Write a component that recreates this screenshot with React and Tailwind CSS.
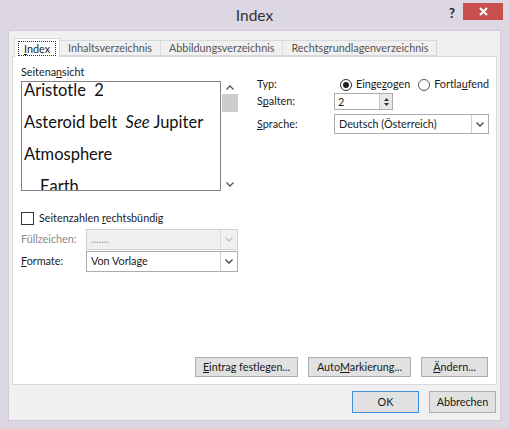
import React from 'react';

const font = { fontFamily: 'Lato, "Noto Sans", sans-serif' };

const Chevron = ({ className = '' }) => (
  <svg width="8" height="5" viewBox="0 0 8 5" className={className}>
    <path d="M0.5 0.5 L4 4 L7.5 0.5" fill="none" stroke="currentColor" strokeWidth="1.3" />
  </svg>
);

const Select = ({ value, disabled, className = '' }) => (
  <div
    className={`flex items-stretch border ${disabled ? 'border-[#d2d2d2] bg-[#f0f0f0] text-[#9a9a9a]' : 'border-[#adadad] bg-white text-[#1a1a1a]'} ${className}`}
  >
    <div className="flex-1 flex items-center pl-[4px] truncate">{value}</div>
    <div className={`w-[17px] flex items-center justify-center border-l ${disabled ? 'border-[#dadada] text-[#c0c0c0]' : 'border-[#d0d0d0] text-[#444]'}`}>
      <Chevron />
    </div>
  </div>
);

const Button = ({ children, primary, className = '' }) => (
  <div
    className={`flex items-center justify-center border ${primary ? 'border-[#3c8fe0]' : 'border-[#adadad]'} bg-[#e1e1e1] text-[#1a1a1a] ${className}`}
  >
    {children}
  </div>
);

export default function App() {
  const tabs = ['Inhaltsverzeichnis', 'Abbildungsverzeichnis', 'Rechtsgrundlagenverzeichnis'];

  return (
    <div className="w-[509px] h-[429px] bg-[#dcd7e3] flex flex-col text-[10.8px] text-[#1a1a1a] overflow-hidden" style={font}>
      {/* title bar */}
      <div className="h-[30px] flex items-center relative shrink-0">
        <div className="flex-1 text-center text-[15.5px] text-[#333] pt-[1px]">Index</div>
        <div className="absolute right-[54px] top-[4px] text-[13px] font-bold text-[#222]">?</div>
        <div className="absolute right-[6px] top-[3px] w-[40px] h-[17px] bg-[#c9504e] flex items-center justify-center">
          <svg width="9" height="9" viewBox="0 0 9 9">
            <path d="M1 1 L8 8 M8 1 L1 8" stroke="white" strokeWidth="2" />
          </svg>
        </div>
      </div>

      {/* client area */}
      <div className="mx-[8px] h-[391px] bg-[#f0f0f0] border border-[#d2ccda] flex flex-col px-[3px] pt-[7px]">
        {/* tabs */}
        <div className="flex items-end h-[18px] pl-[2px] relative z-10">
          <div className="h-[19px] -mb-[1px] px-[3px] flex items-center bg-white border border-b-0 border-[#d9d9d9]">
            <span className="border border-dotted border-[#333] px-[5px] leading-[13px]">
              <span className="underline">I</span>ndex
            </span>
          </div>
          {tabs.map((t) => (
            <div key={t} className="h-[16px] px-[8px] flex items-center border border-l-0 border-[#d9d9d9] bg-[#f0f0f0] text-[#555]">
              {t}
            </div>
          ))}
        </div>

        {/* panel */}
        <div className="h-[329px] bg-white border border-[#d9d9d9] flex flex-col px-[8px] pt-[8px]">
          <div className="flex">
            {/* left column */}
            <div className="w-[217px] flex flex-col">
              <div className="leading-[14px]">
                Seitena<span className="underline">n</span>sicht
              </div>
              <div className="mt-[2px] h-[110px] flex">
                <div className="w-[200px] border border-[#828282] overflow-hidden text-[16.5px] leading-[32px] text-[#111] pl-[2px]">
                  <div className="-mt-[8px]">Aristotle&nbsp;&nbsp;2</div>
                  <div>
                    Asteroid belt&nbsp;&nbsp;<i>See</i> Jupiter
                  </div>
                  <div>Atmosphere</div>
                  <div className="pl-[16px]">Earth</div>
                </div>
                <div className="w-[17px] flex flex-col items-center text-[#555]">
                  <div className="h-[13px] flex items-center"><Chevron className="rotate-180" /></div>
                  <div className="w-[16px] h-[18px] bg-[#cdcdcd]" />
                  <div className="flex-1" />
                  <div className="h-[13px] flex items-center"><Chevron /></div>
                </div>
              </div>

              <div className="mt-[20px] flex items-center h-[14px]">
                <div className="w-[13px] h-[13px] border border-[#333] bg-white" />
                <span className="ml-[5px]">
                  Seitenzahlen <span className="underline">r</span>echtsbündig
                </span>
              </div>

              <div className="mt-[3px] flex items-center h-[22px]">
                <span className="w-[65px] text-[#8a8a8a]">Füllzeichen:</span>
                <Select value="......." disabled className="flex-1 h-[21px]" />
              </div>
              <div className="mt-[1px] flex items-center h-[21px]">
                <span className="w-[65px]">
                  <span className="underline">F</span>ormate:
                </span>
                <Select value="Von Vorlage" className="flex-1 h-[21px]" />
              </div>
            </div>

            {/* right column */}
            <div className="flex-1 pl-[19px] pt-[12px] flex flex-col">
              <div className="flex items-center h-[15px]">
                <span className="w-[83px]">Typ:</span>
                <div className="w-[12px] h-[12px] rounded-full border border-[#333] flex items-center justify-center">
                  <div className="w-[6px] h-[6px] rounded-full bg-[#222]" />
                </div>
                <span className="ml-[4px]">
                  Einge<span className="underline">z</span>ogen
                </span>
                <div className="ml-[8px] w-[12px] h-[12px] rounded-full border border-[#555]" />
                <span className="ml-[4px]">
                  Fortla<span className="underline">u</span>fend
                </span>
              </div>
              <div className="mt-[1px] flex items-center h-[17px]">
                <span className="w-[77px]">
                  S<span className="underline">p</span>alten:
                </span>
                <div className="w-[59px] h-[17px] border border-[#adadad] bg-white flex">
                  <div className="flex-1 pl-[3px] leading-[15px]">2</div>
                  <div className="w-[13px] flex flex-col items-center justify-center gap-[2px] bg-[#e8e8e8] border-l border-[#c8c8c8]">
                    <svg width="5" height="3" viewBox="0 0 5 3"><path d="M0 3 L2.5 0 L5 3Z" fill="#333" /></svg>
                    <svg width="5" height="3" viewBox="0 0 5 3"><path d="M0 0 L2.5 3 L5 0Z" fill="#333" /></svg>
                  </div>
                </div>
              </div>
              <div className="mt-[4px] flex items-center h-[20px]">
                <span className="w-[77px]">
                  <span className="underline">S</span>prache:
                </span>
                <Select value="Deutsch (Österreich)" className="w-[155px] h-[20px]" />
              </div>
            </div>
          </div>

          <div className="flex-1" />

          <div className="flex justify-end gap-[10px] mb-[7px]">
            <Button className="w-[103px] h-[20px]">
              <span><span className="underline">E</span>intrag festlegen...</span>
            </Button>
            <Button className="w-[103px] h-[20px]">
              <span>Auto<span className="underline">M</span>arkierung...</span>
            </Button>
            <Button className="w-[67px] h-[20px]">
              <span><span className="underline">Ä</span>ndern...</span>
            </Button>
          </div>
        </div>

        {/* footer */}
        <div className="flex justify-end gap-[10px] mt-[6px] pr-[1px]">
          <Button primary className="w-[67px] h-[22px]">OK</Button>
          <Button className="w-[67px] h-[22px]">Abbrechen</Button>
        </div>
      </div>
    </div>
  );
}
